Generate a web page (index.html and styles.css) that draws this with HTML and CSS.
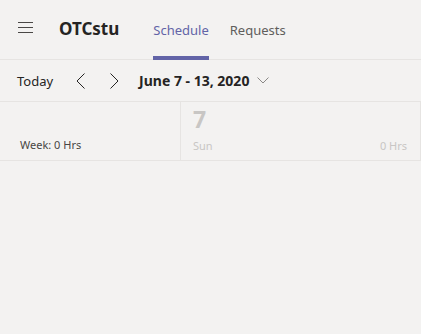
FILE: index.html
```html
<!DOCTYPE html>
<html>
<head>
<meta charset="utf-8">
<link rel="stylesheet" href="styles.css">
</head>
<body>
<div class="app">
  <header class="header">
    <button class="menu" aria-label="Menu">
      <svg width="15" height="12" viewBox="0 0 15 12"><path d="M0 1.5h15M0 6.5h15M0 11.5h15" stroke="#4a4846" stroke-width="1"/></svg>
    </button>
    <h1 class="title">OTCstu</h1>
    <nav class="tabs">
      <a class="tab active">Schedule</a>
      <a class="tab">Requests</a>
    </nav>
  </header>
  <div class="toolbar">
    <span class="today">Today</span>
    <button class="nav-btn" aria-label="Previous">
      <svg width="9" height="16" viewBox="0 0 9 16"><path d="M8.5 0.5L1 8l7.5 7.5" fill="none" stroke="#252423" stroke-width="1"/></svg>
    </button>
    <button class="nav-btn" aria-label="Next">
      <svg width="9" height="16" viewBox="0 0 9 16"><path d="M0.5 0.5L8 8l-7.5 7.5" fill="none" stroke="#252423" stroke-width="1"/></svg>
    </button>
    <span class="range">June 7 - 13, 2020</span>
    <svg class="caret" width="12" height="7" viewBox="0 0 12 7"><path d="M0.5 0.5L6 6l5.5-5.5" fill="none" stroke="#8a8886" stroke-width="1"/></svg>
  </div>
  <div class="week">
    <div class="week-cell summary">Week: 0 Hrs</div>
    <div class="week-cell day">
      <div class="day-num">7</div>
      <div class="day-foot"><span>Sun</span><span>0 Hrs</span></div>
    </div>
  </div>
</div>
</body>
</html>
```
FILE: styles.css
```css
* { box-sizing: border-box; }
html, body { margin: 0; padding: 0; }
body {
  background: #f3f2f1;
  font-family: "Segoe UI", "Noto Sans", "Open Sans", sans-serif;
  color: #252423;
  width: 421px;
  height: 334px;
  overflow: hidden;
}
.header {
  height: 60px;
  display: flex;
  align-items: stretch;
  border-bottom: 1px solid #e6e4e2;
}
.menu {
  border: 0;
  background: none;
  padding: 0;
  margin-left: 18px;
  display: flex;
  align-items: center;
  width: 15px;
  margin-top: -6px;
}
.title {
  margin: 0 0 0 26px;
  font-size: 17px;
  font-weight: 700;
  display: flex;
  align-items: center;
  margin-top: -3px;
}
.tabs {
  display: flex;
  margin-left: 34px;
  gap: 21px;
}
.tab {
  display: flex;
  align-items: center;
  font-size: 13px;
  color: #605e5c;
  padding-top: 4px;
  border-bottom: 4px solid transparent;
  margin-bottom: -1px;
}
.tab.active {
  color: #6264a7;
  border-bottom-color: #6264a7;
}
.toolbar {
  height: 42px;
  display: flex;
  align-items: center;
  padding-left: 17px;
  border-bottom: 1px solid #e6e4e2;
}
.today { font-size: 13px; margin-right: 23px; }
.nav-btn {
  border: 0;
  background: none;
  padding: 0;
  width: 9px;
  height: 16px;
  margin-right: 25px;
  display: flex;
}
.nav-btn + .nav-btn { margin-right: 20px; }
.range { font-size: 14px; font-weight: 700; }
.caret { margin-left: 8px; }
.week {
  height: 59px;
  display: flex;
  border-bottom: 1px solid #e6e4e2;
}
.week-cell { border-right: 1px solid #e6e4e2; }
.summary {
  width: 181px;
  font-size: 11px;
  display: flex;
  align-items: flex-end;
  padding: 0 0 8px 20px;
  color: #484644;
}
.day {
  width: 240px;
  padding: 5px 13px 7px 12px;
  display: flex;
  flex-direction: column;
  justify-content: space-between;
}
.day-num {
  font-size: 23px;
  font-weight: 700;
  color: #c8c6c4;
  line-height: 24px;
}
.day-foot {
  display: flex;
  justify-content: space-between;
  font-size: 11px;
  color: #c8c6c4;
}
```
